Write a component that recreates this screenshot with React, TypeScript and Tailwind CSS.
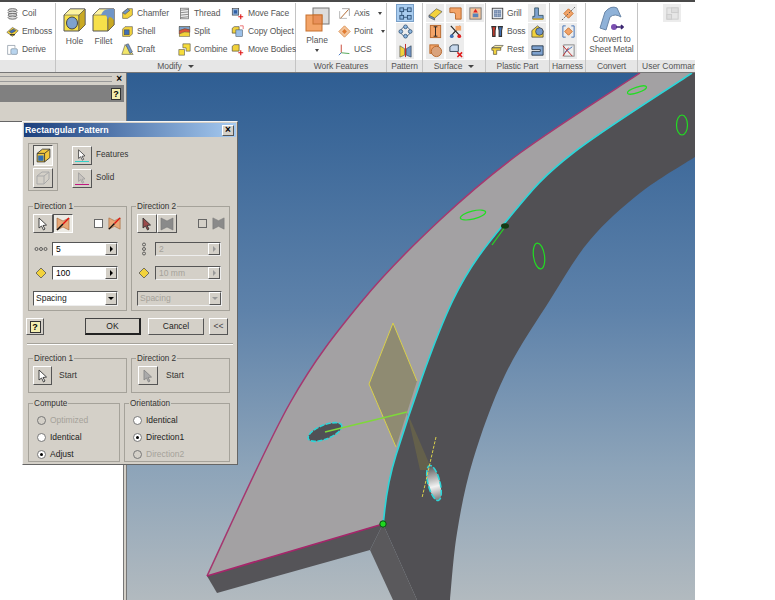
import React from "react";

const font = { fontFamily: '"Liberation Sans", Arial, sans-serif' };
const O = "#4d4d4d";

const glyphs: Record<string, React.ReactNode> = {
  coil: (<g fill="#ddd" stroke="#555"><ellipse cx="8" cy="4" rx="5.5" ry="2" /><ellipse cx="8" cy="7" rx="5.5" ry="2" /><ellipse cx="8" cy="10" rx="5.5" ry="2" /><ellipse cx="8" cy="13" rx="5.5" ry="2" /></g>),
  emboss: (<g stroke={O} strokeWidth=".7"><path d="M1 9 L8 3 L15 7 L8 14 Z" fill="#f2d23c" /><path d="M4 8 L9 5 L12 7 L7 10 Z" fill="#3f6fb5" /><path d="M5 12 L11 12" stroke="#111" strokeWidth="1.2" /></g>),
  derive: (<g stroke="#7d8b99" strokeWidth=".8"><path d="M2 3 H11 V6" fill="none" /><path d="M2 3 V14 H6" fill="none" /><rect x="6" y="7" width="8" height="7" rx="1.5" fill="#b8d4ee" /></g>),
  chamfer: (<g stroke={O} strokeWidth=".7"><path d="M2 7 L8 2 H14 V10 L8 14 H2 Z" fill="#f2d23c" /><path d="M2 7 L8 2 L11 4 L5 9 Z" fill="#6f95c7" /></g>),
  shell: (<g stroke={O} strokeWidth=".7"><path d="M2 5 L5 2 H14 V11 L11 14 H2 Z" fill="#f2d23c" /><rect x="4" y="6" width="6" height="6" fill="#3f6fb5" /></g>),
  draft: (<g stroke={O} strokeWidth=".7"><path d="M1 14 L5 2 L15 14 Z" fill="#f2e66a" /><path d="M6 2 L9 1 L14 11 L11 13 Z" fill="#6f95c7" /></g>),
  thread: (<g stroke="#777" strokeWidth="1" fill="none"><rect x="3" y="1.5" width="10" height="13" fill="#eee" /><path d="M3 4 L13 3 M3 7 L13 6 M3 10 L13 9 M3 13 L13 12" /></g>),
  split: (<g stroke={O} strokeWidth=".6"><rect x="1.5" y="2" width="13" height="12" fill="#f2d23c" /><path d="M1.5 2 H14.5 V6 Q8 3 1.5 7 Z" fill="#7ea2cf" /><path d="M1.5 7 Q8 3 14.5 6 V9 Q8 7 1.5 11 Z" fill="#e0553a" /></g>),
  combine: (<g stroke={O} strokeWidth=".7" fill="#f6dc3c"><path d="M1 8 H8 V15 H1 Z" /><path d="M6 1 H15 V10 H10 V6 H6 Z" /></g>),
  moveFace: (<g strokeWidth=".7"><rect x="1.5" y="2" width="8" height="8" fill="#8fb0d8" stroke="#333" /><rect x="3.5" y="4" width="4" height="4" fill="#2f5fa5" /><path d="M12 9 V15 M9 12 H15" stroke="#e01818" strokeWidth="1.4" /></g>),
  copy: (<g strokeWidth=".7"><path d="M1.5 4 L4 2 H10 V10 H1.5 Z" fill="#f2d23c" stroke="#333" /><rect x="6" y="6" width="8" height="8" fill="#9cc0e8" stroke="#456" /><path d="M11 1 H15 V5" fill="none" stroke="#e01818" /></g>),
  moveBodies: (<g strokeWidth=".7"><path d="M1.5 4 L4 2 H10 V10 H1.5 Z" fill="#f2d23c" stroke="#333" /><path d="M12 9 V15 M9 12 H15" stroke="#e01818" strokeWidth="1.4" /></g>),
  axis: (<g fill="none"><path d="M5 2 H14 V11" stroke="#999" /><path d="M2 5 V14 H11" stroke="#aaa" /><path d="M3 14 L13 3" stroke="#b0672f" strokeWidth="1.2" /></g>),
  point: (<g><path d="M8 1 L15 8 L8 15 L1 8 Z" fill="#f3c49a" stroke="#d98a4a" /><path d="M8 5 L11 8 L8 11 L5 8 Z" fill="#e07a30" /></g>),
  ucs: (<g fill="none" strokeWidth="1.1"><path d="M4 12 V2" stroke="#c63a2a" /><path d="M4 12 L14 13" stroke="#48a048" /><path d="M4 12 L1 15" stroke="#3a6ec0" /></g>),
  rect: (<g stroke="#2a4c70" strokeWidth=".9"><path d="M4 4 H12 M4 12 H12 M4 4 V12" fill="none" /><rect x="2" y="2" width="4" height="4" fill="#8fb8e2" /><rect x="10" y="2" width="4" height="4" fill="#8fb8e2" /><rect x="2" y="10" width="4" height="4" fill="#8fb8e2" /><rect x="10" y="10" width="4" height="4" fill="#8fb8e2" /></g>),
  circ: (<g stroke="#2a4c70" strokeWidth=".8" fill="#8fb8e2"><circle cx="8" cy="8" r="5" fill="none" /><circle cx="8" cy="3" r="2" /><circle cx="13" cy="8" r="2" /><circle cx="8" cy="13" r="2" /><circle cx="3" cy="8" r="2" /></g>),
  mirror: (<g strokeWidth=".7"><path d="M2 3 L7 6 V13 L2 15 Z" fill="#f2d23c" stroke="#555" /><path d="M14 3 L9 6 V13 L14 15 Z" fill="#6f95c7" stroke="#345" /><path d="M8 1 V15" stroke="#c02020" strokeWidth="1" /></g>),
  s1: (<g stroke="#555" strokeWidth=".7"><path d="M1 10 L9 3 L15 6 L7 13 Z" fill="#f2d23c" /><path d="M1 10 L7 13 V15 L1 12 Z" fill="#6f95c7" /></g>),
  s2: (<path d="M2 2 H14 V14 H8 V9 Q8 7 6 7 H2 Z" fill="#f3a468" stroke="#b7682d" />),
  s3: (<g><rect x="2" y="2" width="12" height="12" fill="#f3c49a" stroke="#777" /><rect x="5" y="8" width="6" height="4" fill="#5b83b8" /><path d="M8 3 L5.5 7 H10.5 Z" fill="#e02020" /></g>),
  s4: (<g><rect x="2.5" y="1.5" width="11" height="13" fill="#f3a468" stroke="#b7682d" /><path d="M8 3 V13 M6 3 H10 M6 13 H10" stroke="#222" /></g>),
  s5: (<g><path d="M3 2 L13 13" stroke="#222" strokeWidth="1.2" /><path d="M13 2 L3 13" stroke="#222" strokeWidth="1.2" /><path d="M8 2 H14 V7 H8 Z" fill="#f3a468" /><circle cx="4" cy="13" r="2" fill="#3f6fb5" /><circle cx="12" cy="13" r="2" fill="#e02020" /></g>),
  s6: (<g stroke="#b7682d"><rect x="2" y="2" width="9" height="9" fill="#f3a468" /><circle cx="9" cy="9" r="5.5" fill="#d9a27c" /></g>),
  s7: (<g><path d="M2 4 L5 2 H11 V9 H2 Z" fill="#c7d8ec" stroke="#345" /><path d="M10 10 L15 15 M15 10 L10 15" stroke="#e01818" strokeWidth="1.6" /></g>),
  grill: (<g><rect x="1.5" y="1.5" width="13" height="13" fill="#dfe5ec" stroke="#333" /><rect x="4" y="4" width="8" height="8" fill="#3f5f8f" /><path d="M4 6 H12 M4 8 H12 M4 10 H12 M6 4 V12 M8 4 V12 M10 4 V12" stroke="#dfe5ec" strokeWidth=".6" /></g>),
  boss: (<g strokeWidth="1.3"><path d="M1 2 H6 L5 7 V14 H2 V7 Z" fill="#d23a2a" stroke="#333" /><path d="M9 2 H14 L13 7 V14 H10 V7 Z" fill="#3f6fb5" stroke="#333" /></g>),
  rest: (<g stroke="#333" strokeWidth=".7"><path d="M1 6 L5 3 H15 L12 6 Z" fill="#f6e9a0" /><path d="M1 6 H12 V9 H7 V14 H3 V9 H1 Z" fill="#f2d23c" /></g>),
  lip: (<g stroke="#245" strokeWidth=".8"><path d="M5 2 H9 V10 H14 V14 H3 V11 H5 Z" fill="#7ea2cf" /><path d="M3 14 H14" stroke="#e0b020" strokeWidth="1.4" /></g>),
  rule: (<g stroke="#333" strokeWidth=".7"><path d="M2 7 L8 2 L14 7 V14 H2 Z" fill="#f2d23c" /><circle cx="10" cy="8" r="4" fill="#6f95c7" /></g>),
  snap: (<path d="M2 3 H14 V13 H2 V9 H11 V7 H2 Z" fill="#7ea2cf" stroke="#123" strokeWidth=".8" />),
  h1: (<g><path d="M8 3 L13 8 L8 13 L3 8 Z" fill="#f3a468" stroke="#c6702f" /><path d="M1 15 L15 1" stroke="#555" strokeDasharray="2 1.5" /></g>),
  h2: (<g><path d="M2 2 H5 M2 2 V14 H5 M14 2 H11 M14 2 V14 H11" fill="none" stroke="#3f6fb5" /><path d="M8 4 L12 8 L8 12 L4 8 Z" fill="#f3a468" stroke="#c6702f" /></g>),
  h3: (<g><rect x="3" y="2" width="11" height="12" fill="#eee" stroke="#888" /><path d="M2 3 L12 14 M2 14 L8 5" stroke="#c02020" /><path d="M4 10 L12 4" stroke="#3f6fb5" /></g>),
  user: (<g fill="#ddd" stroke="#ccc"><rect x="2" y="2" width="12" height="12" fill="#e6e6e6" /><rect x="7" y="2" width="7" height="5" /><rect x="2" y="9" width="5" height="5" /></g>),
};

function G({ k, s = 14 }: { k: string; s?: number }) {
  return <svg width={s} height={s} viewBox="0 0 16 16" className="shrink-0">{glyphs[k]}</svg>;
}

function RibbonRow({ label, k, w, gap = "gap-[5px]", drop }: { label: string; k: string; w: string; gap?: string; drop?: boolean }) {
  return (
    <div className={`flex items-center ${gap} h-[18px] ${w}`}>
      <G k={k} s={13} />
      <span className="text-[8.5px] tracking-[-0.1px] leading-none text-[#555] whitespace-nowrap">{label}</span>
      {drop && <span className="ml-[5px] w-0 h-0 border-x-[2.5px] border-x-transparent border-t-[3px] border-t-[#444]" />}
    </div>
  );
}

function Cell({ k }: { k: string }) {
  return (
    <div className="w-[18px] h-[18px] flex items-center justify-center bg-[#ececec]">
      <G k={k} s={15} />
    </div>
  );
}

function Group({ title, w, children, arrow }: { title: string; w: string; children: React.ReactNode; arrow?: boolean }) {
  return (
    <div className={`${w} shrink-0 flex flex-col border-r border-[#c4c4c4]`}>
      <div className="h-[57px] bg-white flex">{children}</div>
      <div className="h-[12px] bg-[#e6e6e6] flex items-center justify-center gap-[6px] text-[8.5px] tracking-[-0.1px] leading-none text-[#555] whitespace-nowrap overflow-hidden">
        {title}
        {arrow && <span className="w-0 h-0 border-x-[3px] border-x-transparent border-t-[3px] border-t-[#444]" />}
      </div>
    </div>
  );
}

function BigTool({ label, round, w }: { label: string; round?: boolean; w: string }) {
  return (
    <div className={`${w} flex flex-col items-center pt-[5px]`}>
      <svg width="23" height="24" viewBox="0 0 23 24">
        <path d="M1 7 L7 1 L22 1 L22 17 L16 23 L1 23 Z" fill="#f6e04a" stroke="#555" />
        <path d="M7 1 L22 1 L16 7 L1 7 Z" fill="#fdf3a0" stroke="#555" strokeWidth=".6" />
        <path d="M16 7 V23" stroke="#555" />
        <path d="M16 7 L22 1 V17 L16 23 Z" fill="#c9a923" stroke="#555" strokeWidth=".6" />
        {round ? <path d="M9 7 Q11 1 17 1 L22 1 L22 12 Q17 6 16 12 L14 7 Z" fill="#6f95c7" /> : <ellipse cx="9" cy="15" rx="5.5" ry="6" fill="#7ea2cf" stroke="#444" />}
      </svg>
      <span className="text-[8.5px] leading-none text-[#555] mt-[5px]">{label}</span>
    </div>
  );
}

function Ribbon() {
  return (
    <div className="w-[695px] h-[73px] flex flex-col relative z-0">
      <div className="h-[2px] bg-[#4a4a4a] mb-[1px]" />
      <div className="flex h-[69px]">
        <Group title="" w="w-[56px]">
          <div className="pl-[6px] pt-[1px] flex flex-col">
            <RibbonRow label="Coil" k="coil" w="w-[48px]" gap="gap-[3px]" />
            <RibbonRow label="Emboss" k="emboss" w="w-[48px]" gap="gap-[3px]" />
            <RibbonRow label="Derive" k="derive" w="w-[48px]" gap="gap-[3px]" />
          </div>
        </Group>
        <Group title="Modify" w="w-[240px]" arrow>
          <div className="pl-[4px] flex">
            <BigTool label="Hole" w="w-[29px]" />
            <BigTool label="Fillet" w="w-[29px]" round />
          </div>
          <div className="pl-[3px] pt-[1px] flex flex-col w-[58px]">
            <RibbonRow label="Chamfer" k="chamfer" w="w-[55px]" gap="gap-[3px]" />
            <RibbonRow label="Shell" k="shell" w="w-[55px]" gap="gap-[3px]" />
            <RibbonRow label="Draft" k="draft" w="w-[55px]" gap="gap-[3px]" />
          </div>
          <div className="pl-[2px] pt-[1px] flex flex-col w-[55px]">
            <RibbonRow label="Thread" k="thread" w="w-[53px]" gap="gap-[3px]" />
            <RibbonRow label="Split" k="split" w="w-[53px]" gap="gap-[3px]" />
            <RibbonRow label="Combine" k="combine" w="w-[53px]" gap="gap-[3px]" />
          </div>
          <div className="pt-[1px] flex flex-col">
            <RibbonRow label="Move Face" k="moveFace" w="w-[65px]" gap="gap-[4px]" />
            <RibbonRow label="Copy Object" k="copy" w="w-[65px]" gap="gap-[4px]" />
            <RibbonRow label="Move Bodies" k="moveBodies" w="w-[65px]" gap="gap-[4px]" />
          </div>
        </Group>
        <Group title="Work Features" w="w-[91px]">
          <div className="w-[42px] flex flex-col items-center pt-[4px]">
            <svg width="25" height="25" viewBox="0 0 25 25">
              <rect x="8" y="1" width="16" height="16" fill="#ddd" stroke="#777" />
              <rect x="1" y="8" width="16" height="16" fill="#f3a468" stroke="#c6702f" />
              <rect x="8" y="8" width="9" height="9" fill="#e8905a" stroke="#c6702f" />
            </svg>
            <span className="text-[8.5px] leading-none text-[#555] mt-[4px]">Plane</span>
            <span className="mt-[4px] w-0 h-0 border-x-[2.5px] border-x-transparent border-t-[3px] border-t-[#444]" />
          </div>
          <div className="pt-[1px] flex flex-col">
            <RibbonRow label="Axis" k="axis" w="w-[48px]" gap="gap-[3px]" drop />
            <RibbonRow label="Point" k="point" w="w-[48px]" gap="gap-[3px]" drop />
            <RibbonRow label="UCS" k="ucs" w="w-[48px]" gap="gap-[3px]" />
          </div>
        </Group>
        <Group title="Pattern" w="w-[36px]">
          <div className="pl-[9px] pt-[1px] flex flex-col gap-[0.5px]">
            <div className="w-[18px] h-[18px] flex items-center justify-center bg-[#a9cdf0] border border-[#7aa0c8]"><G k="rect" s={15} /></div>
            <Cell k="circ" />
            <Cell k="mirror" />
          </div>
        </Group>
        <Group title="Surface" w="w-[63px]" arrow>
          <div className="pl-[3px] pt-[1px] grid grid-cols-[18px_18px_18px] gap-x-[2px] gap-y-[0.5px] h-fit">
            <Cell k="s1" />
            <Cell k="s2" />
            <Cell k="s3" />
            <Cell k="s4" />
            <Cell k="s5" />
            <div />
            <Cell k="s6" />
            <Cell k="s7" />
          </div>
        </Group>
        <Group title="Plastic Part" w="w-[64px]">
          <div className="pl-[5px] pt-[1px] flex flex-col">
            <RibbonRow label="Grill" k="grill" w="w-[37px]" gap="gap-[3px]" />
            <RibbonRow label="Boss" k="boss" w="w-[37px]" gap="gap-[3px]" />
            <RibbonRow label="Rest" k="rest" w="w-[37px]" gap="gap-[3px]" />
          </div>
          <div className="pt-[1px] flex flex-col gap-[0.5px]">
            <Cell k="lip" />
            <Cell k="rule" />
            <Cell k="snap" />
          </div>
        </Group>
        <Group title="Harness" w="w-[36px]">
          <div className="pl-[9px] pt-[1px] flex flex-col gap-[0.5px]">
            <Cell k="h1" />
            <Cell k="h2" />
            <Cell k="h3" />
          </div>
        </Group>
        <Group title="Convert" w="w-[52px]">
          <div className="w-full flex flex-col items-center pt-[3px]">
            <svg width="25" height="25" viewBox="0 0 25 25">
              <path d="M1 22 L6 6 Q12 -1 18 2 L22 11 Q16 7 11 11 L7 24 Z" fill="#8fb2d8" stroke="#6a87a8" />
              <circle cx="15" cy="21" r="3" fill="#7b4fb0" />
              <path d="M17 21 H24 M22 19 L24 21 L22 23" stroke="#3a2470" strokeWidth="1.6" fill="none" />
            </svg>
            <span className="text-[8.5px] tracking-[-0.1px] leading-[10px] text-[#555] text-center mt-[3px] whitespace-nowrap">Convert to<br />Sheet Metal</span>
          </div>
        </Group>
        <div className="flex-1 min-w-0 flex flex-col overflow-hidden">
          <div className="h-[57px] bg-white flex pl-[25px] pt-[1px]">
            <Cell k="user" />
          </div>
          <div className="h-[12px] bg-[#e6e6e6] pl-[4px] flex items-center text-[8.5px] leading-none text-[#555] whitespace-nowrap overflow-hidden">User Commands</div>
        </div>
      </div>
      <div className="h-px bg-[#777]" />
    </div>
  );
}

function LeftPanel() {
  return (
    <div className="w-[127px] shrink-0 flex flex-col bg-white">
      <div className="h-[49px] bg-[#d4d0c8] flex flex-col border-b border-[#666] border-r border-r-[#777] shrink-0">
        <div className="h-[12px] flex items-center pr-[4px] gap-[4px]">
          <div className="flex-1 h-[6px] border-y border-[#999]" />
          <span className="text-[10px] font-bold leading-none text-black">×</span>
        </div>
        <div className="h-[17px] bg-[#808080] flex items-center justify-end pr-[3px] mr-[2px]">
          <div className="w-[10px] h-[12px] bg-[#f3eeb0] border border-[#333] text-[9px] leading-[10px] font-bold text-center">?</div>
        </div>
      </div>
      <div className="flex-1 flex justify-end">
        <div className="w-[4px] h-full bg-[#d4d0c8] border-x border-[#777]" />
      </div>
    </div>
  );
}

function Fieldset({ title, className, children }: { title: string; className: string; children?: React.ReactNode }) {
  return (
    <div className={`relative border border-[#a5a29a] shrink-0 ${className}`}>
      <span className="absolute -top-[6px] left-[4px] px-[1px] bg-[#d4d0c8] text-[8.2px] leading-[11px] text-[#333] whitespace-nowrap">{title}</span>
      {children}
    </div>
  );
}

function Btn({ className = "", children, pressed }: { className?: string; children?: React.ReactNode; pressed?: boolean }) {
  return (
    <div
      className={`flex items-center justify-center border border-solid shrink-0 ${
        pressed ? "border-t-[#555] border-l-[#555] border-r-white border-b-white bg-[#eceae4]" : "border-t-white border-l-white border-r-[#555] border-b-[#555] bg-[#d4d0c8]"
      } ${className}`}
    >
      {children}
    </div>
  );
}

function Arrow({ c = "white", stroke = "#333", s = 14 }: { c?: string; stroke?: string; s?: number }) {
  return (
    <svg width={s} height={s} viewBox="0 0 14 14">
      <path d="M3 1 L3 11 L5.5 9 L7.5 13 L9 12 L7 8.5 L10.5 8 Z" fill={c} stroke={stroke} strokeWidth="0.9" strokeLinejoin="round" />
    </svg>
  );
}

function CrossShape({ gray, s = 16 }: { gray?: boolean; s?: number }) {
  return (
    <svg width={s} height={s} viewBox="0 0 16 16" className="shrink-0">
      <path d="M2 2 L8 5 L14 2 L14 14 L8 11 L2 14 Z" fill={gray ? "#8a8a8a" : "#e8a878"} stroke={gray ? "#777" : "#a06030"} strokeWidth="0.6" />
      {!gray && <path d="M2 14 L8 8" stroke="#111" strokeWidth="1.5" />}
      {!gray && <path d="M8 8 L14 2" stroke="#e01010" strokeWidth="1.5" />}
    </svg>
  );
}

function Spin({ value, disabled }: { value: string; disabled?: boolean }) {
  return (
    <div className={`w-[66px] h-[14px] flex items-center border-t border-l border-[#555] border-b border-r border-b-[#eee] border-r-[#eee] ${disabled ? "bg-[#d4d0c8] text-[#a5a29a]" : "bg-white text-black"}`}>
      <span className="flex-1 pl-[3px] text-[8.5px] leading-none whitespace-nowrap">{value}</span>
      <Btn className="w-[12px] h-[12px]">
        <span className={`w-0 h-0 border-y-[3px] border-y-transparent border-l-[3px] ${disabled ? "border-l-[#999]" : "border-l-black"}`} />
      </Btn>
    </div>
  );
}

function Combo({ disabled }: { disabled?: boolean }) {
  return (
    <div className={`w-[85px] h-[15px] flex items-center border-t border-l border-[#555] border-b border-r border-b-[#eee] border-r-[#eee] ${disabled ? "bg-[#d4d0c8] text-[#a5a29a]" : "bg-white text-[#222]"}`}>
      <span className="flex-1 pl-[2px] text-[8.5px] leading-none">Spacing</span>
      <Btn className="w-[12px] h-[13px]">
        <span className={`w-0 h-0 border-x-[3px] border-x-transparent border-t-[3px] ${disabled ? "border-t-[#999]" : "border-t-black"}`} />
      </Btn>
    </div>
  );
}

function Diamond() {
  return (
    <svg width="12" height="12" viewBox="0 0 12 12">
      <path d="M6 1 L11 6 L6 11 L1 6 Z" fill="#f2d23c" stroke="#555" strokeWidth="0.8" />
    </svg>
  );
}

function DirectionBox({ title, first }: { title: string; first?: boolean }) {
  const dis = !first;
  return (
    <Fieldset title={title} className="h-[105px] w-[99px]">
      <div className={`flex items-center ${first ? "pl-[4px]" : "pl-[5px]"} pt-[7px]`}>
        <Btn className="w-[20px] h-[19px]"><Arrow c={first ? "white" : "#9b4a4a"} /></Btn>
        <Btn className="w-[20px] h-[19px]" pressed={first}><CrossShape gray={dis} /></Btn>
        <div className={`ml-[21px] w-[9px] h-[9px] border border-[#666] ${first ? "bg-white" : "bg-[#d4d0c8]"}`} />
        <div className="ml-[4px]"><CrossShape gray={dis} s={15} /></div>
      </div>
      <div className="flex items-center pt-[9px]">
        <span className="w-[23px] flex justify-center shrink-0">
          {first ? (
            <svg width="14" height="6" viewBox="0 0 14 6" fill="none" stroke="#444" strokeWidth=".8"><circle cx="2.5" cy="3" r="1.5" /><circle cx="7" cy="3" r="1.5" /><circle cx="11.5" cy="3" r="1.5" /></svg>
          ) : (
            <svg width="6" height="14" viewBox="0 0 6 14" fill="none" stroke="#444" strokeWidth=".8"><circle cx="3" cy="2.5" r="1.5" /><circle cx="3" cy="7" r="1.5" /><circle cx="3" cy="11.5" r="1.5" /></svg>
          )}
        </span>
        <Spin value={first ? "5" : "2"} disabled={dis} />
      </div>
      <div className="flex items-center pt-[10px]">
        <span className="w-[23px] flex justify-center shrink-0"><Diamond /></span>
        <Spin value={first ? "100" : "10 mm"} disabled={dis} />
      </div>
      <div className={`${first ? "pl-[4px]" : "pl-[5px]"} pt-[11px]`}><Combo disabled={dis} /></div>
    </Fieldset>
  );
}

function Radio({ label, on, disabled }: { label: string; on?: boolean; disabled?: boolean }) {
  return (
    <div className="h-[17px] flex items-center gap-[4px]">
      <div className={`w-[9px] h-[9px] rounded-full border border-[#777] flex items-center justify-center ${disabled ? "bg-[#d4d0c8]" : "bg-white"}`}>
        {on && <div className="w-[3px] h-[3px] rounded-full bg-black" />}
      </div>
      <span className={`text-[8.5px] leading-none ${disabled ? "text-[#a5a29a]" : "text-[#222]"}`}>{label}</span>
    </div>
  );
}

function Dialog() {
  return (
    <div style={font} className="absolute left-[22px] top-[121px] w-[216px] h-[344px] bg-[#d4d0c8] border border-[#f5f5f5] border-r-[#666] border-b-[#666] z-10">
      <div className="mx-[1px] mt-[1px] h-[14px] flex items-center justify-between pl-[1px] pr-[2px] bg-gradient-to-r from-[#1c3f7c] to-[#a6caf0]">
        <span className="text-[8.8px] leading-none font-bold text-white">Rectangular Pattern</span>
        <Btn className="w-[12px] h-[11px] text-[10px] leading-none font-bold text-black">×</Btn>
      </div>
      <div className="flex pl-[5px] pt-[6px] h-[69px]">
        <div className="w-[30px] h-[48px] border border-[#a5a29a] pt-[1px] pl-[4px] flex flex-col gap-[2px]">
          <Btn pressed className="w-[20px] h-[21px]"><svg width="17" height="17" viewBox="0 0 16 16"><path d="M2 6 L7 2 H14 V10 L9 14 H2 Z" fill="#f2c83c" stroke="#333" strokeWidth=".8" /><path d="M2 6 H9 V14 M9 6 L14 2" fill="none" stroke="#333" strokeWidth=".8" /><rect x="3" y="8" width="5" height="5" fill="#2f6fb5" /></svg></Btn>
          <Btn className="w-[20px] h-[20px]"><svg width="16" height="16" viewBox="0 0 16 16"><path d="M2 6 L7 2 H14 V9 L9 14 H2 Z" fill="none" stroke="#aaa" /><path d="M2 6 H9 V14 M9 6 L14 2" fill="none" stroke="#aaa" /></svg></Btn>
        </div>
        <div className="ml-[14px] flex flex-col gap-[4px] pt-[3px]">
          <div className="flex items-center gap-[4px]">
            <Btn className="w-[20px] h-[19px] flex-col"><Arrow s={12} /><span className="w-[14px] h-[1.5px] bg-[#30d0c8]" /></Btn>
            <span className="text-[8.2px] leading-none text-[#333]">Features</span>
          </div>
          <div className="flex items-center gap-[4px]">
            <Btn className="w-[20px] h-[19px] flex-col"><Arrow s={12} c="#c8c4c0" stroke="#999" /><span className="w-[14px] h-[1.5px] bg-[#c01880]" /></Btn>
            <span className="text-[8.2px] leading-none text-[#333]">Solid</span>
          </div>
        </div>
      </div>
      <div className="flex pl-[5px] gap-[4px]">
        <DirectionBox title="Direction 1" first />
        <DirectionBox title="Direction 2" />
      </div>
      <div className="flex items-center pl-[3px] pt-[7px]">
        <Btn className="w-[18px] h-[17px]">
          <span className="w-[11px] h-[12px] bg-[#f3eeb0] border border-[#333] text-[9px] leading-[10px] font-bold text-center">?</span>
        </Btn>
        <Btn className="ml-[41px] w-[56px] h-[17px] border-b-2 border-r-2 !border-b-[#222] !border-r-[#222] !border-t-[#444] !border-l-[#444] text-[8.5px] leading-none text-[#222]">OK</Btn>
        <Btn className="ml-[7px] w-[56px] h-[17px] text-[8.5px] leading-none text-[#222]">Cancel</Btn>
        <Btn className="ml-[5px] w-[19px] h-[17px] text-[8.5px] leading-none text-[#444]">&lt;&lt;</Btn>
      </div>
      <div className="mx-[4px] mt-[8px] h-[2px] border-t border-[#a5a29a] border-b border-b-white" />
      <div className="flex pl-[5px] gap-[4px] mt-[13px]">
        <Fieldset title="Direction 1" className="w-[99px] h-[35px]">
          <div className="flex items-center pl-[4px] pt-[7px] gap-[7px]">
            <Btn className="w-[19px] h-[19px]"><Arrow /></Btn>
            <span className="text-[8.5px] leading-none text-[#333]">Start</span>
          </div>
        </Fieldset>
        <Fieldset title="Direction 2" className="w-[99px] h-[35px]">
          <div className="flex items-center pl-[6px] pt-[7px] gap-[8px]">
            <Btn className="w-[20px] h-[19px]"><Arrow c="#aaa" stroke="#888" /></Btn>
            <span className="text-[8.5px] leading-none text-[#333]">Start</span>
          </div>
        </Fieldset>
      </div>
      <div className="flex pl-[5px] gap-[4px] mt-[10px]">
        <Fieldset title="Compute" className="w-[92px] h-[59px]">
          <div className="pl-[8px] pt-[8px]">
            <Radio label="Optimized" disabled />
            <Radio label="Identical" />
            <Radio label="Adjust" on />
          </div>
        </Fieldset>
        <Fieldset title="Orientation" className="w-[106px] h-[59px]">
          <div className="pl-[8px] pt-[8px]">
            <Radio label="Identical" />
            <Radio label="Direction1" on />
            <Radio label="Direction2" disabled />
          </div>
        </Fieldset>
      </div>
    </div>
  );
}

type P = [number, number];

function spline(pts: P[], move = true) {
  let d = move ? `M${pts[0][0]} ${pts[0][1]}` : `L${pts[0][0]} ${pts[0][1]}`;
  for (let i = 0; i < pts.length - 1; i++) {
    const p0 = pts[Math.max(i - 1, 0)];
    const p1 = pts[i];
    const p2 = pts[i + 1];
    const p3 = pts[Math.min(i + 2, pts.length - 1)];
    const c1x = p1[0] + (p2[0] - p0[0]) / 6;
    const c1y = p1[1] + (p2[1] - p0[1]) / 6;
    const c2x = p2[0] - (p3[0] - p1[0]) / 6;
    const c2y = p2[1] - (p3[1] - p1[1]) / 6;
    d += ` C${c1x.toFixed(1)} ${c1y.toFixed(1)} ${c2x.toFixed(1)} ${c2y.toFixed(1)} ${p2[0]} ${p2[1]}`;
  }
  return d;
}

const purple: P[] = [[207, 576], [290, 403], [363, 300], [440, 220], [520, 153], [640, 73]];
const cyan: P[] = [[383, 524], [396, 455], [453, 300], [513, 213], [573, 153], [692, 73]];
const lower: P[] = [[450, 600], [457, 533], [473, 460], [505, 375], [550, 300], [590, 240], [640, 193], [695, 157]];

function Scene() {
  const cyanRev = [...cyan].reverse();
  const top = `${spline(purple)} ${spline(cyanRev, false)} Z`;
  const side = `${spline(cyan)} L695 73 ${spline([...lower].reverse(), false)} L417 600 Z`;
  return (
    <svg width="568" height="527" viewBox="127 73 568 527" className="block w-[568px] h-[527px] shrink-0">
      <defs>
        <linearGradient id="bg" x1="0" y1="0" x2="0" y2="1">
          <stop offset="0" stopColor="#2f5e93" />
          <stop offset="0.45" stopColor="#5e82aa" />
          <stop offset="0.75" stopColor="#8da4b9" />
          <stop offset="1" stopColor="#b2babf" />
        </linearGradient>
        <linearGradient id="hole" x1="0" y1="0" x2="0" y2="1">
          <stop offset="0" stopColor="#555" />
          <stop offset="0.6" stopColor="#f2f2f2" />
          <stop offset="1" stopColor="#777" />
        </linearGradient>
      </defs>
      <rect x="127" y="73" width="568" height="527" fill="url(#bg)" />
      <path d={top} fill="#a3a1a3" />
      <path d="M393 323 L417 381 L396 447 L369 384 Z" fill="#8f8b72" />
      <path d="M369 384 L393 323 L417 381 M369 384 L396 447" fill="none" stroke="#d9d04c" strokeWidth="1" />
      <path d={side} fill="#515054" />
      <path d="M207 576 L383 524 L370 550 L217 593 Z" fill="#555458" />
      <path d="M383 524 L370 550 L393 600 L417 600 Z" fill="#5a595c" />
      <path d="M407 412 L432 470 L420 470 Z" fill="#6b6548" opacity="0.75" />
      <path d={spline(purple)} fill="none" stroke="#a5386f" strokeWidth="1.5" />
      <path d="M207 576 L383 524" fill="none" stroke="#a5266a" strokeWidth="1.8" />
      <path d={spline(cyan)} fill="none" stroke="#2fd5d8" strokeWidth="1.7" />
      <ellipse cx="637" cy="90" rx="10" ry="2.8" fill="none" stroke="#22dd22" strokeWidth="1.2" transform="rotate(-18 637 90)" />
      <ellipse cx="682" cy="125" rx="5.5" ry="10" fill="none" stroke="#22dd22" strokeWidth="1.2" />
      <ellipse cx="473" cy="215" rx="13" ry="4" fill="none" stroke="#22dd22" strokeWidth="1.2" transform="rotate(-14 473 215)" />
      <ellipse cx="539" cy="256" rx="5.5" ry="13" fill="none" stroke="#22dd22" strokeWidth="1.2" transform="rotate(-8 539 256)" />
      <path d="M492 245 L505 227" stroke="#22dd22" strokeWidth="1.2" />
      <ellipse cx="505" cy="226" rx="4" ry="2.8" fill="#153a15" />
      <ellipse cx="325" cy="432" rx="18" ry="7" fill="#505055" stroke="#2fd5d8" strokeWidth="1.6" strokeDasharray="5 1.5" transform="rotate(-22 325 432)" />
      <path d="M325 432 L407 412" stroke="#7fd83a" strokeWidth="1.5" />
      <ellipse cx="434" cy="483" rx="6" ry="18" fill="url(#hole)" stroke="#2fd5d8" strokeWidth="1.6" strokeDasharray="6 2" transform="rotate(-14 434 483)" />
      <path d="M436 437 L422 498" stroke="#d9d04c" strokeWidth="1" strokeDasharray="3 1.5" />
      <circle cx="383" cy="524" r="3.2" fill="#1fd81f" stroke="#0b4d12" />
    </svg>
  );
}

export default function App() {
  return (
    <div style={font} className="relative w-[775px] h-[600px] overflow-hidden bg-white">
      <Ribbon />
      <div className="flex h-[527px]">
        <LeftPanel />
        <Scene />
      </div>
      <Dialog />
    </div>
  );
}
